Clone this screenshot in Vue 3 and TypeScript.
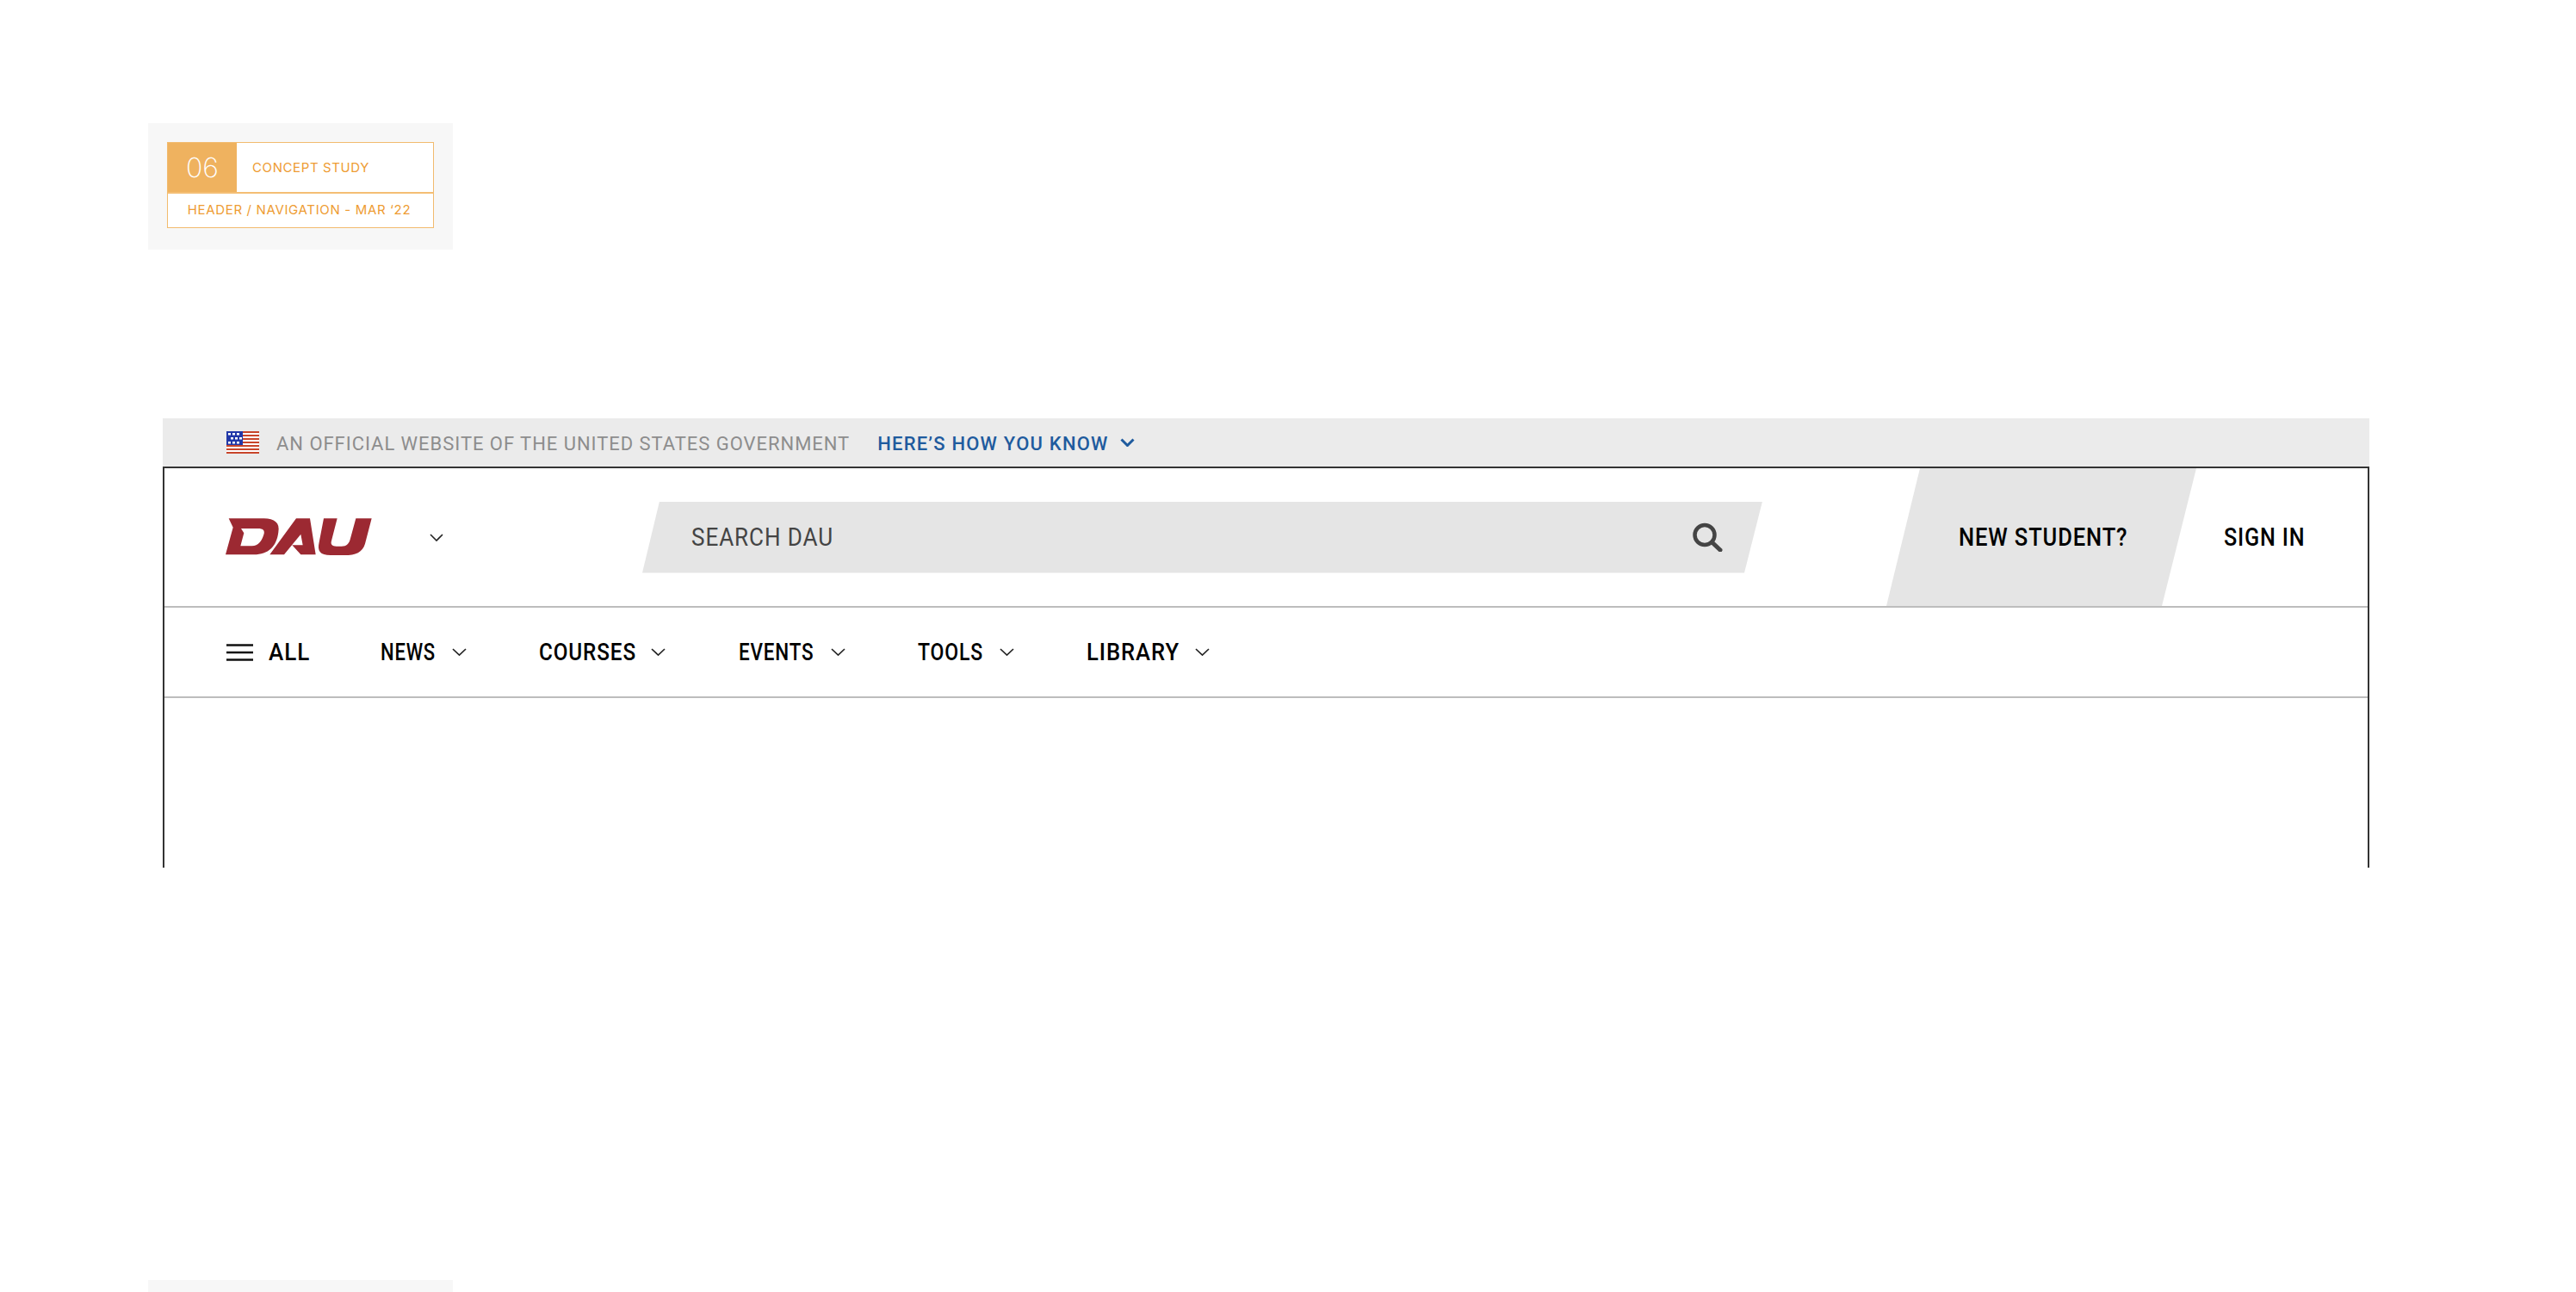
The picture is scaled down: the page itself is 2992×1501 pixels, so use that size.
<template>
  <div class="page">
    <div class="tile">
      <div class="stamp">
        <div class="stamp__top">
          <div class="stamp__num">06</div>
          <div class="stamp__kind">CONCEPT STUDY</div>
        </div>
        <div class="stamp__sub">HEADER / NAVIGATION - MAR ‘22</div>
      </div>
    </div>

    <div class="gov">
      <svg class="gov__flag" width="38" height="26" viewBox="0 0 38 26">
        <rect width="38" height="26" fill="#fff" />
        <rect v-for="i in 7" :key="i" x="0" :y="(i - 1) * 4" width="38" height="2" fill="#c8452a" />
        <rect width="19" height="16" fill="#2138a8" />
        <rect v-for="s in stars" :key="s.join()" :x="s[0]" :y="s[1]" width="3" height="2.5" fill="#fff" />
      </svg>
      <span class="gov__text">AN OFFICIAL WEBSITE OF THE UNITED STATES GOVERNMENT</span>
      <span class="gov__link">HERE’S HOW YOU KNOW</span>
      <svg class="gov__chev" width="17" height="10" viewBox="0 0 17 10">
        <path d="M1.5 1.5 8.5 8.5 15.5 1.5" fill="none" stroke="#1f5b9e" stroke-width="3" />
      </svg>
    </div>

    <div class="frame">
      <div class="head">
        <svg class="logo" width="170" height="44" viewBox="36 36 510 132">
          <path fill="#9c2932" fill-rule="evenodd" d="M47 37H170C206 37 226 52 220 85C214 135 185 163 135 163H36L62 68ZM90 72 100 88 88 133H128C150 133 163 115 170 90C173 78 165 72 150 72Z" />
          <path fill="#9c2932" d="M190 163 282 37H330L350 163H298L268 130H305L298 92 240 163Z" />
          <path fill="#9c2932" d="M378 37H425L405 115C401 128 408 134 422 134H440C458 134 466 124 470 110L490 37H545L522 125C513 155 490 165 450 165H402C365 165 355 150 362 120Z" />
        </svg>
        <svg class="head__chev" width="16" height="9" viewBox="0 0 16 9">
          <path d="M1 1 8 8 15 1" fill="none" stroke="#222" stroke-width="1.6" />
        </svg>
        <div class="search">
          <span class="search__text">SEARCH DAU</span>
          <svg class="search__icon" width="36" height="34" viewBox="0 0 36 34">
            <circle cx="15" cy="14.5" r="11.5" fill="none" stroke="#444" stroke-width="4.5" />
            <path d="M23.5 23 33 32" fill="none" stroke="#444" stroke-width="5" stroke-linecap="round" />
          </svg>
        </div>
        <div class="cta"><span class="ind ind--cta">NEW STUDENT?</span></div>
        <span class="ind ind--signin">SIGN IN</span>
      </div>

      <div class="nav">
        <div class="nav__item">
          <svg width="31" height="20" viewBox="0 0 31 20">
            <path d="M0 1.5H31M0 10H31M0 18.500H31" stroke="#111" stroke-width="2.4" />
          </svg>
          <span class="ind ind--nav" :style="labelStyle(allLink)">{{ allLink.label }}</span>
        </div>
        <div v-for="item in navItems" :key="item.label" class="nav__item">
          <span class="ind ind--nav" :style="labelStyle(item)">{{ item.label }}</span>
          <svg width="17" height="9" viewBox="0 0 17 9">
            <path d="M1 1 8.500 8 16 1" fill="none" stroke="#222" stroke-width="1.7" />
          </svg>
        </div>
      </div>
    </div>

    <div class="tile tile--next" />
  </div>
</template>

<script setup lang="ts">
// width = box the label has to fill, natural = what Roboto gives at 28px
interface NavLabel {
  label: string
  width: number
  natural: number
}

const allLink: NavLabel = { label: 'ALL', width: 45.5, natural: 49 }

const navItems: NavLabel[] = [
  { label: 'NEWS', width: 64.5, natural: 82 },
  { label: 'COURSES', width: 112, natural: 129 },
  { label: 'EVENTS', width: 89, natural: 111 },
  { label: 'TOOLS', width: 76.5, natural: 93 },
  { label: 'LIBRARY', width: 108, natural: 118 },
]

const labelStyle = (l: NavLabel) => ({
  width: `${l.width}px`,
  transform: `scaleX(${(l.width / l.natural).toFixed(3)})`,
})

const stars: number[][] = [
  [2, 2], [7, 2], [12, 2],
  [5, 7], [10, 7], [15, 7],
  [2, 12], [7, 12], [12, 12],
]
</script>

<style scoped>
.page {
  height: 1501px;
  overflow: hidden;
  padding-top: 143px;
  box-sizing: border-box;
  background: #fff;
  font-family: Roboto, "Liberation Sans", sans-serif;
}
.tile {
  width: 354px;
  height: 147px;
  margin-left: 172px;
  padding: 22px;
  box-sizing: border-box;
  background: #f7f7f7;
}
.tile--next {
  margin-top: 479px;
}
.stamp {
  width: 310px;
  height: 100px;
  box-sizing: border-box;
  border: 1.5px solid #f2bb6e;
  background: #fff;
  font-family: Inter, sans-serif;
  color: #ee9c33;
}
.stamp__top {
  display: flex;
  align-items: center;
  height: 57px;
  border-bottom: 2px solid #f4be74;
}
.stamp__num {
  display: flex;
  align-items: center;
  justify-content: center;
  width: 80px;
  height: 100%;
  background: #efb25f;
  color: #fff;
  font-size: 32px;
  font-weight: 200;
}
.stamp__kind {
  margin-left: 18px;
  font-size: 15px;
  letter-spacing: 0.6px;
}
.stamp__sub {
  padding: 9px 3px 0 0;
  text-align: center;
  font-size: 15px;
  letter-spacing: 0.65px;
}
.gov {
  display: flex;
  align-items: center;
  width: 2563px;
  height: 56px;
  margin: 196px 0 0 189px;
  padding-left: 74px;
  box-sizing: border-box;
  background: #ebebeb;
  font-size: 22px;
  letter-spacing: 0.96px;
  white-space: nowrap;
}
.gov__text {
  margin-left: 20px;
  padding-top: 2px;
  color: #8d8d8d;
}
.gov__link {
  margin-left: 32px;
  padding-top: 2px;
  color: #1f5b9e;
  font-weight: 500;
  letter-spacing: 1.2px;
}
.gov__chev {
  margin-left: 13px;
}
.frame {
  width: 2563px;
  height: 466px;
  margin-left: 189px;
  box-sizing: border-box;
  border: 2px solid #333;
  border-bottom: 0;
}
.head {
  display: flex;
  align-items: center;
  height: 162px;
  padding-left: 71px;
  box-sizing: border-box;
  border-bottom: 2px solid #bdbdbd;
}
.head__chev {
  margin-left: 67px;
}
.search {
  display: flex;
  align-items: center;
  justify-content: space-between;
  width: 1301px;
  height: 83px;
  margin-left: 231px;
  padding: 0 46px 0 57px;
  box-sizing: border-box;
  background: #e5e5e5;
  clip-path: polygon(20px 0, 100% 0, 1280px 100%, 0 100%);
}
.search__text {
  width: 165px;
  color: #444;
  font-size: 29px;
  letter-spacing: 1px;
  white-space: nowrap;
  transform: scaleX(0.9);
  transform-origin: left center;
}
.cta {
  display: flex;
  align-items: center;
  align-self: stretch;
  width: 360px;
  margin-left: 144px;
  padding-left: 84px;
  box-sizing: border-box;
  background: #e5e5e5;
  clip-path: polygon(39px 0, 100% 0, 320px 100%, 0 100%);
}
.ind {
  display: block;
  color: #000;
  font-size: 29px;
  font-weight: 500;
  letter-spacing: 1px;
  white-space: nowrap;
  transform-origin: left center;
}
.ind--cta {
  width: 197px;
  transform: scaleX(0.88);
}
.ind--signin {
  width: 94px;
  margin-left: 32px;
  transform: scaleX(0.866);
}
.ind--nav {
  font-size: 28px;
}
.nav {
  display: flex;
  align-items: center;
  gap: 84.5px;
  height: 105px;
  padding-left: 72px;
  box-sizing: border-box;
  border-bottom: 2px solid #bdbdbd;
}
.nav__item {
  display: flex;
  align-items: center;
  gap: 18px;
}
</style>
